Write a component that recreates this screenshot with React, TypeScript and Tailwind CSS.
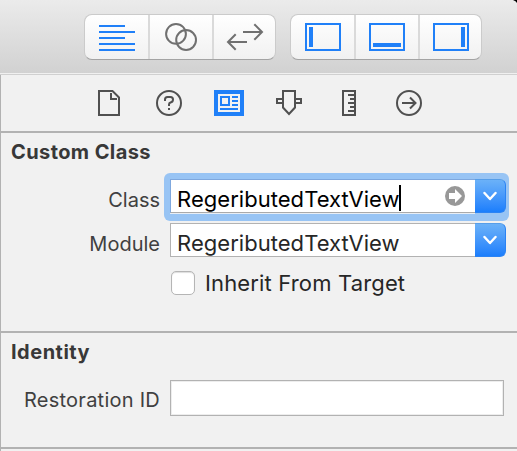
import type { ReactNode } from "react";

const blue = "#2080f8";
const ink = "#505050";

function SegmentGroup({ children }: { children: ReactNode }) {
  return (
    <div className="flex h-[46px] w-[192px] items-stretch overflow-hidden rounded-lg border border-[#cbcbcb] border-b-[#a3a3a3] bg-linear-to-b from-white to-[#f1f1f1]">
      {children}
    </div>
  );
}

function PanelIcon({ x, y, w, h }: { x: number; y: number; w: number; h: number }) {
  return (
    <svg width="36" height="28" fill="none" stroke={blue} strokeWidth="2">
      <rect x="1" y="1" width="34" height="26" />
      <rect x={x} y={y} width={w} height={h} fill={blue} stroke="none" />
    </svg>
  );
}

function Toolbar() {
  return (
    <header className="flex h-[75px] gap-[14px] border-b border-[#d0d0d0] bg-linear-to-b from-[#ebebeb] to-[#d1d1d1] pl-[84px] pt-[14px] shadow-[inset_0_-1px_0_#f0f0f0]">
      <SegmentGroup>
        <div className="w-[65px] border-r-2 border-[#dadada] pl-[14px] pt-[10px]">
          <svg width="36" height="26" fill={blue}>
            <path d="M0 0h26v2H0zM0 6h36v2H0zM0 12h26v2H0zM0 18h36v2H0zM0 24h36v2H0z" />
          </svg>
        </div>
        <div className="w-[64px] border-r-2 border-[#dadada] pl-[15px] pt-[8px]">
          <svg width="32" height="28" fill="none" stroke="#707070" strokeWidth="2">
            <circle cx="11" cy="10.9" r="9.9" />
            <circle cx="21.1" cy="17" r="9.9" />
          </svg>
        </div>
        <div className="w-[61px] pl-[12px] pt-[8px]">
          <svg width="39" height="28" fill="none" stroke="#707070" strokeWidth="2">
            <path d="M17 9h18.5M28.3 1.2 36 9l-7.7 7.8M21 19H2.5M9.7 11.2 2 19l7.7 7.8" />
          </svg>
        </div>
      </SegmentGroup>
      <SegmentGroup>
        <div className="w-[65px] border-r-2 border-[#dadada] pl-[14px] pt-[8px]">
          <PanelIcon x={4} y={4} w={4} h={20} />
        </div>
        <div className="w-[64px] border-r-2 border-[#dadada] pl-[13px] pt-[8px]">
          <PanelIcon x={4} y={20} w={28} h={4} />
        </div>
        <div className="w-[61px] pl-[13px] pt-[8px]">
          <PanelIcon x={28} y={4} w={4} h={20} />
        </div>
      </SegmentGroup>
      <svg className="absolute right-0 top-0" width="4" height="3">
        <path d="M0 0h4v3Q3 1 0 0" />
      </svg>
    </header>
  );
}

function InspectorTabs() {
  return (
    <nav className="flex h-[58px] items-center border-b-2 border-[#b2b2b2] pl-[93px] [&>svg]:mr-[30px]">
      <svg width="30" height="26" fill="none" stroke={ink} strokeWidth="2">
        <path d="M5 1h13.5L25 7.5V25H5zM17 3v6h6" />
      </svg>
      <svg width="30" height="26" fill="none" stroke={ink} strokeWidth="2">
        <circle cx="15" cy="13" r="12" />
        <path d="M11 11V9.5Q11 7 13.500 7h3Q19 7 19 9.500t-2.500 3Q15 13 15 14.500V16M15 18v2" />
      </svg>
      <svg width="30" height="26" fill={blue}>
        <path d="M0 0h30v26H0z" />
        <path fill="#f2f2f2" d="M4 4h22v18H4z" />
        <path d="M6 6h10v10H6zM18 6h6v2h-6zM18 10h6v2h-6zM18 14h6v2h-6zM6 18h18v2H6z" />
        <path fill="#f2f2f2" d="M8 8h6v6H8z" />
      </svg>
      <svg width="30" height="26" fill="none" stroke={ink} strokeWidth="2">
        <path d="M9 1h12v16.500l-6 6.500-6-6.500zM9 9H3v4h6M21 9h6v4h-6" />
      </svg>
      <svg width="30" height="26" fill="none" stroke={ink} strokeWidth="2">
        <path d="M9 1h12v24H9zM14 5h6M16 9h4M14 13h6M16 17h4M14 21h6" />
      </svg>
      <svg width="30" height="26" fill="none" stroke={ink} strokeWidth="2">
        <circle cx="15" cy="13" r="12" />
        <path d="M8 13h13.500M16 7.500 21.500 13 16 18.500" />
      </svg>
    </nav>
  );
}

function DropButton() {
  return (
    <span className="flex h-[34px] w-[31px] items-center justify-center rounded-r-md border border-l-0 border-[#2b83f4] border-t-[#569ee9] bg-linear-to-b from-[#6bb1f8] to-[#1a7efc]">
      <svg width="14" height="10" fill="none" stroke="white" strokeWidth="2.4" strokeLinecap="round" strokeLinejoin="round">
        <path d="m1.500 2 5.500 6 5.500-6" />
      </svg>
    </span>
  );
}

function Label({ children }: { children: ReactNode }) {
  return (
    <span className="w-[159px] shrink-0 text-right text-[20px] leading-[34px] text-[#404040]">
      {children}
    </span>
  );
}

export default function App() {
  return (
    <div className="relative flex h-[451px] w-[517px] flex-col overflow-hidden bg-[#f1f1f1] font-['Inter','Liberation_Sans',sans-serif] whitespace-nowrap">
      <Toolbar />
      <main className="flex flex-1 flex-col border-l border-[#b2b2b2]">
        <InspectorTabs />
        <section className="flex h-[200px] flex-col border-b-2 border-[#b2b2b2] pt-[5px]">
          <h2 className="h-[41px] pl-[10px] text-[20px] font-bold leading-[28px] tracking-[0.4px] text-[#383838]">
            Custom Class
          </h2>
          <div className="flex h-[44px] items-start gap-[10px]">
            <Label><span className="relative top-[4px]">Class</span></Label>
            <div className="-ml-[6px] -mt-[6px] flex h-[48px] rounded-md bg-[#98c4f4] pb-[8px] pl-[6px] pr-[3px] pt-[6px]">
              <div className="flex w-[305px] items-center border border-r-0 border-[#7fa8de] border-b-[#aaa] bg-white pl-[6px] text-[22px] text-black shadow-[0_1px_0_#e8eef5]">
                <span className="relative top-[3px] tracking-[0.04px]">RegeributedTextView</span>
                <i className="relative top-[2px] -ml-px h-[26px] w-[2px] bg-black" />
                <svg className="ml-auto mr-[10px]" width="20" height="20">
                  <circle cx="10" cy="10" r="10" fill="#989898" />
                  <path fill="white" d="M4 7h6V3l7 7-7 7v-4H4z" />
                </svg>
              </div>
              <DropButton />
            </div>
          </div>
          <div className="flex h-[48px] gap-[10px]">
            <Label><span className="relative top-[4px]">Module</span></Label>
            <div className="flex h-[34px]">
              <div className="flex w-[305px] items-center border border-r-0 border-[#b2b2b2] bg-white pl-[6px] text-[22px] text-[#262626]">
                <span className="relative top-[3px] tracking-[0.04px]">RegeributedTextView</span>
              </div>
              <DropButton />
            </div>
          </div>
          <label className="flex h-[24px] items-center gap-[10px] pl-[170px] text-[22px] text-[#262626]">
            <i className="h-[24px] w-[24px] rounded-[5px] border border-[#b5b5b5] bg-white shadow-[inset_0_1px_1px_#ddd]" />
            <span className="tracking-[0.15px]">Inherit From Target</span>
          </label>
        </section>
        <section className="flex h-[116px] shrink-0 flex-col border-b-2 border-[#b2b2b2] pt-[5px]">
          <h2 className="h-[42px] pl-[10px] text-[20px] font-bold leading-[28px] tracking-[0.5px] text-[#383838]">
            Identity
          </h2>
          <div className="flex gap-[10px]">
            <Label><span className="relative top-[3px] tracking-[0.25px]">Restoration ID</span></Label>
            <div className="h-[36px] w-[334px] border border-[#b2b2b2] bg-white shadow-[inset_0_0_0_1px_#ededed]" />
          </div>
        </section>
      </main>
    </div>
  );
}
